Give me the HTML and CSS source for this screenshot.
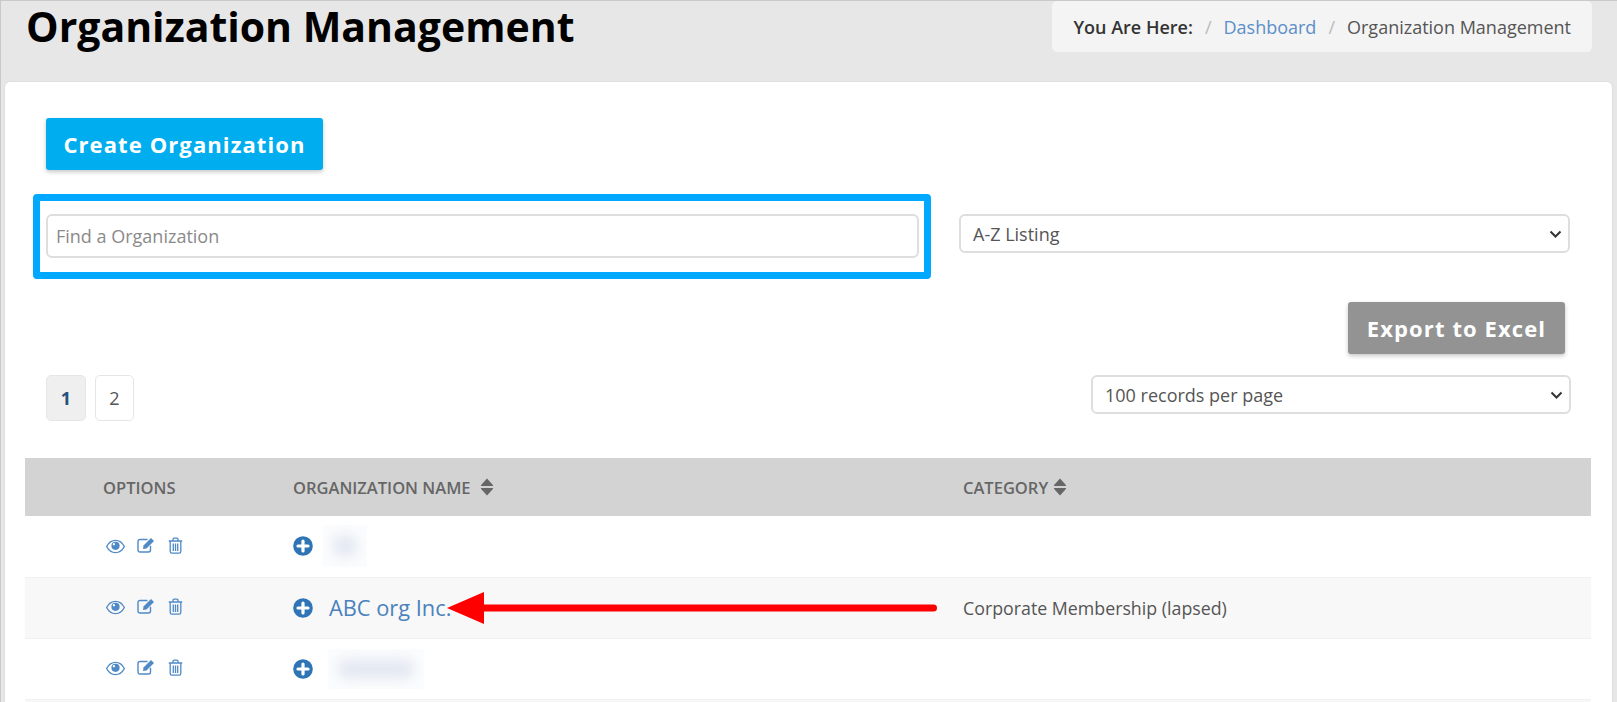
FILE: index.html
```html
<!DOCTYPE html>
<html lang="en">
<head>
<meta charset="utf-8">
<title>Organization Management</title>
<link rel="stylesheet" href="styles.css">
</head>
<body>
<svg class="defs" width="0" height="0" aria-hidden="true">
  <symbol id="i-eye" viewBox="0 0 18 14">
    <path d="M.6 7C2.6 3.2 5.6 1.2 9 1.2S15.4 3.2 17.4 7C15.4 10.8 12.400 12.800 9 12.800S2.600 10.800 .6 7Z" fill="none" stroke="currentColor" stroke-width="1.300"/>
    <circle cx="9" cy="6.400" r="3.900" fill="currentColor"/>
    <circle cx="7.500" cy="4.900" r="1.100" fill="#fff"/>
  </symbol>
  <symbol id="i-edit" viewBox="0 0 19 16">
    <path d="M13.500 8.800V13a2 2 0 0 1-2 2H3a2 2 0 0 1-2-2V4.500a2 2 0 0 1 2-2h7.500" fill="none" stroke="currentColor" stroke-width="1.400"/>
    <path d="M6.500 8.500 14 1l3 3-7.500 7.500-3.500.6Z" fill="currentColor"/>
  </symbol>
  <symbol id="i-trash" viewBox="0 0 15 17">
    <path d="M2.200 4.500V14.500a1.700 1.700 0 0 0 1.700 1.700h7.200a1.700 1.700 0 0 0 1.700-1.700V4.500M.8 4h13.400M5 3.800V2.300a1.200 1.200 0 0 1 1.200-1.200h2.600A1.200 1.200 0 0 1 10 2.300V3.800M5.300 6.500v7.500M7.500 6.500v7.500M9.700 6.500v7.500" fill="none" stroke="currentColor" stroke-width="1.300"/>
  </symbol>
  <symbol id="i-plus" viewBox="0 0 20 20">
    <circle cx="10" cy="10" r="9.800" fill="currentColor"/>
    <path d="M10 5v10M5 10h10" stroke="#fff" stroke-width="3.200" stroke-linecap="round"/>
  </symbol>
  <symbol id="i-sort" viewBox="0 0 13 18">
    <path d="M6.500.6 12.400 7a.7.7 0 0 1-.5 1.100H1.100A.7.7 0 0 1 .6 7ZM6.500 17.400 12.400 11a.7.7 0 0 0-.5-1.100H1.100A.7.7 0 0 0 .6 11Z" fill="currentColor"/>
  </symbol>
</svg>

<div class="page">
  <header class="page-head">
    <h1 class="title">Organization Management</h1>
    <nav class="crumbs">
      <strong class="crumb-label">You Are Here:</strong>
      <span class="crumb-sep">/</span>
      <a class="crumb-link" href="#">Dashboard</a>
      <span class="crumb-sep">/</span>
      <span class="crumb-current">Organization Management</span>
    </nav>
  </header>

  <main class="card">
    <a class="btn btn-create" href="#">Create Organization</a>

    <div class="filters">
      <div class="search-highlight">
        <input class="search-input" type="text" placeholder="Find a Organization">
      </div>
      <select class="select select-listing">
        <option>A-Z Listing</option>
      </select>
    </div>

    <div class="export-row">
      <a class="btn btn-export" href="#">Export to Excel</a>
    </div>

    <div class="pager-row">
      <div class="pager">
        <a class="page-num page-active" href="#">1</a>
        <a class="page-num" href="#">2</a>
      </div>
      <select class="select select-records">
        <option>100 records per page</option>
      </select>
    </div>

    <table class="grid">
      <thead>
        <tr>
          <th class="col-options">OPTIONS</th>
          <th class="col-name">ORGANIZATION NAME <svg class="sort sort-name"><use href="#i-sort"/></svg></th>
          <th class="col-cat">CATEGORY <svg class="sort"><use href="#i-sort"/></svg></th>
        </tr>
      </thead>
      <tbody>
        <tr>
          <td class="col-options"><div class="opts"><svg class="i i-eye"><use href="#i-eye"/></svg><svg class="i i-edit"><use href="#i-edit"/></svg><svg class="i i-trash"><use href="#i-trash"/></svg></div></td>
          <td class="col-name"><div class="name"><svg class="i-plus"><use href="#i-plus"/></svg><span class="redact redact-a"><span class="redact-ink"></span></span></div></td>
          <td class="col-cat"></td>
        </tr>
        <tr class="alt">
          <td class="col-options"><div class="opts"><svg class="i i-eye"><use href="#i-eye"/></svg><svg class="i i-edit"><use href="#i-edit"/></svg><svg class="i i-trash"><use href="#i-trash"/></svg></div></td>
          <td class="col-name"><div class="name"><svg class="i-plus"><use href="#i-plus"/></svg><a class="org-link" href="#">ABC org Inc.</a></div></td>
          <td class="col-cat">Corporate Membership (lapsed)</td>
        </tr>
        <tr>
          <td class="col-options"><div class="opts"><svg class="i i-eye"><use href="#i-eye"/></svg><svg class="i i-edit"><use href="#i-edit"/></svg><svg class="i i-trash"><use href="#i-trash"/></svg></div></td>
          <td class="col-name"><div class="name"><svg class="i-plus"><use href="#i-plus"/></svg><span class="redact redact-b"><span class="redact-ink"></span></span></div></td>
          <td class="col-cat"></td>
        </tr>
        <tr class="alt"><td colspan="3" class="tail"></td></tr>
      </tbody>
    </table>
  </main>

  <svg class="arrow" viewBox="0 0 490 32" aria-hidden="true">
    <path d="M37 16H486.500" stroke="#fe0000" stroke-width="7" stroke-linecap="round"/>
    <path d="M0 16 37 0V32Z" fill="#fe0000"/>
  </svg>
</div>
</body>
</html>
```
FILE: styles.css
```css
* { box-sizing: border-box; }
html, body { margin: 0; height: 100%; overflow: hidden; }
body {
  background: #e7e7e7;
  font-family: "Open Sans", "Noto Sans", sans-serif;
  color: #555;
}
.defs { position: absolute; }
.page {
  position: relative;
  height: 702px;
  border-top: 1px solid #c9c9c9;
  border-left: 1px solid #c9c9c9;
  overflow: hidden;
}
.page-head {
  height: 81px;
  display: flex;
  justify-content: space-between;
  align-items: flex-start;
  padding: 0 25px 0 25px;
}
.title {
  margin: 0;
  font-size: 41px;
  line-height: 50px;
  font-weight: 700;
  color: #000;
  letter-spacing: 0;
}
.crumbs {
  height: 51px;
  padding: 0 21px;
  display: flex;
  align-items: center;
  gap: 11px;
  background: #f4f4f4;
  border-radius: 5px;
  font-size: 18px;
  color: #555;
  white-space: nowrap;
}
.crumb-label { font-weight: 600; color: #333; }
.crumb-sep { color: #bbb; margin: 0 1px; }
.crumb-link { color: #5b8fc9; text-decoration: none; }
.crumb-current { color: #555; }

.card {
  margin: 0 5px 0 4px;
  height: 640px;
  padding: 36px 20px 0 20px;
  background: #fff;
  border-radius: 5px;
  box-shadow: 0 0 2px rgba(0,0,0,.12);
}
.btn {
  display: inline-block;
  height: 52px;
  line-height: 52px;
  border-radius: 3px;
  color: #fff;
  font-size: 22px;
  font-weight: 700;
  letter-spacing: 1.1px;
  text-decoration: none;
  text-align: center;
  box-shadow: 0 2px 4px rgba(0,0,0,.22);
}
.btn-create { width: 277px; margin-left: 21px; background: #00aeef; display: block; }
.btn-export { width: 217px; background: #939393; }

.filters {
  display: flex;
  align-items: flex-start;
  margin: 24px 0 0 8px;
}
.search-highlight {
  width: 898px;
  height: 85px;
  padding: 13px 0 0 6px;
  border: 7px solid #00a8ff;
  border-radius: 4px;
  flex: none;
}
.search-input {
  display: block;
  width: 873px;
  height: 44px;
  padding: 0 8px;
  border: 2px solid #dedede;
  border-radius: 6px;
  font: 400 18px "Open Sans", sans-serif;
  color: #555;
  outline: none;
}
.search-input::placeholder { color: #8a8a8a; opacity: 1; }
.select {
  display: block;
  height: 39px;
  padding: 0 12px;
  border: 2px solid #dedede;
  border-radius: 6px;
  background-color: #fff;
  background-image: url("data:image/svg+xml,%3Csvg xmlns='http://www.w3.org/2000/svg' width='13' height='8' viewBox='0 0 13 8'%3E%3Cpath d='M1.500 1.500 6.500 6.500 11.500 1.500' fill='none' stroke='%23333' stroke-width='2'/%3E%3C/svg%3E");
  background-repeat: no-repeat;
  background-position: right 6px center;
  appearance: none;
  font: 400 18px "Open Sans", sans-serif;
  color: #555;
}
.select-listing { width: 611px; margin: 20px 0 0 28px; }
.export-row {
  display: flex;
  justify-content: flex-end;
  margin-top: 23px;
  padding-right: 27px;
}
.pager-row {
  display: flex;
  justify-content: space-between;
  align-items: flex-start;
  margin-top: 21px;
  padding: 0 21px 0 21px;
}
.pager { display: flex; gap: 9px; }
.page-num {
  width: 39px;
  height: 46px;
  display: flex;
  align-items: center;
  justify-content: center;
  border: 1px solid #e6e6e6;
  border-radius: 5px;
  background: #fff;
  font-size: 18px;
  color: #555;
  text-decoration: none;
}
.page-active { width: 40px; background: #efefef; color: #23527c; font-weight: 700; }
.select-records { width: 480px; }

.grid {
  width: 1566px;
  margin-top: 37px;
  border-collapse: collapse;
  table-layout: fixed;
}
.grid th {
  height: 58px;
  padding: 0;
  background: #d3d3d3;
  text-align: left;
  font-size: 16.500px;
  font-weight: 600;
  color: #666;
  white-space: nowrap;
}
.grid td {
  height: 61px;
  padding: 0;
  border-bottom: 1px solid #f1f1f1;
  font-size: 17.800px;
  color: #555;
}
.grid tr.alt td { background: #f8f8f8; }
.col-options { width: 268px; padding-left: 78px !important; }
.col-name { width: 670px; }
.opts { display: flex; align-items: center; margin-left: 3px; color: #4f8ac6; }
.i { display: block; color: #4f8ac6; }
.i-eye { width: 19px; height: 15px; }
.i-edit { width: 19px; height: 16px; margin: -3px 0 0 12px; }
.i-trash { width: 15px; height: 17px; margin: -2px 0 0 12px; }
.name { display: flex; align-items: center; height: 100%; }
.i-plus { width: 20px; height: 20px; color: #2f75b5; flex: none; }
.org-link { margin-left: 16px; font-size: 21.800px; color: #4a82bd; text-decoration: none; white-space: nowrap; }
.sort { width: 14px; height: 18px; color: #666; vertical-align: -2px; margin-left: 1px; }
.sort-name { margin-left: 5px; }
.redact {
  display: block;
  background: #fbfcfd;
  overflow: hidden;
  padding: 10px;
}
.redact-a { width: 44px; height: 42px; margin-left: 10px; }
.redact-b { width: 96px; height: 40px; margin-left: 15px; }
.redact-ink {
  display: block;
  height: 100%;
  background: #e4e9f2;
  border-radius: 8px;
  filter: blur(6px);
}
.tail { height: 10px !important; }
.arrow {
  position: absolute;
  left: 446px;
  top: 591px;
  width: 490px;
  height: 32px;
}
```
